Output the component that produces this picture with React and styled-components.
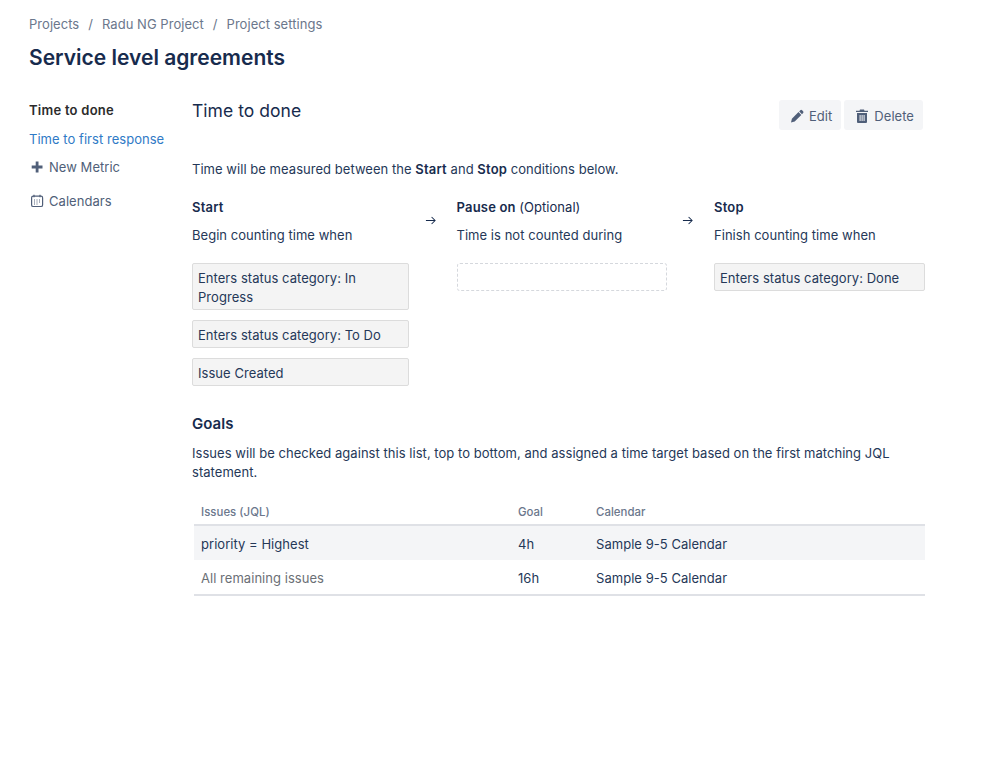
import React from "react";
import styled, { createGlobalStyle } from "styled-components";

const GlobalStyle = createGlobalStyle`
  html, body {
    margin: 0;
    background: #fff;
    font-family: Inter, "Liberation Sans", sans-serif;
    color: #172b4d;
  }
`;

const Page = styled.div`
  width: 999px;
  height: 759px;
  box-sizing: border-box;
  padding: 15px 74px 0 29px;
  overflow: hidden;
`;

const Breadcrumbs = styled.nav`
  display: flex;
  gap: 9px;
  height: 18px;
  line-height: 18px;
  font-size: 13px;
  letter-spacing: 0.04px;
  color: #6b778c;
`;

const PageTitle = styled.h1`
  margin: 10px 0 0;
  font-size: 21px;
  line-height: 30px;
  font-weight: 600;
  color: #172b4d;
`;

const Columns = styled.div`
  display: flex;
  margin-top: 27px;
`;

const Sidebar = styled.aside`
  width: 163px;
  flex-shrink: 0;
  font-size: 13px;
  letter-spacing: 0.04px;
`;

const NavItem = styled.div`
  display: flex;
  align-items: center;
  height: 20px;
  margin-bottom: ${(p) => p.$gap}px;
  font-weight: ${(p) => (p.$active ? 600 : 400)};
  letter-spacing: ${(p) => (p.$active ? "0.25px" : "inherit")};
  color: ${(p) => (p.$active ? "#2b2b2b" : p.$link ? "#2f7ac6" : "#505f79")};
`;

const NavIcon = styled.svg`
  width: 16px;
  height: 16px;
  margin-right: 4px;
  color: #505f79;
`;

const Main = styled.main`
  width: 733px;
  font-size: 13px;
  letter-spacing: 0.04px;
  line-height: 20px;
  color: #253858;
`;

const Header = styled.div`
  display: flex;
  justify-content: space-between;
  align-items: flex-start;
`;

const MetricTitle = styled.h2`
  margin: 0;
  font-size: 17.5px;
  line-height: 21px;
  font-weight: 400;
  color: #172b4d;
`;

const Actions = styled.div`
  display: flex;
  gap: 3px;
  margin-right: 2px;
`;

const ActionButton = styled.button`
  display: flex;
  align-items: center;
  gap: 4px;
  height: 30px;
  padding: 1px 9px 0 10px;
  border: 0;
  border-radius: 3px;
  background: #f4f5f7;
  color: #505f79;
  font: inherit;
  letter-spacing: inherit;
`;

const Intro = styled.p`
  margin: 29px 0 0;
`;

const Strong = styled.b`
  font-weight: 600;
  letter-spacing: 0.2px;
  color: #172b4d;
`;

const Flow = styled.div`
  display: flex;
  margin-top: 18px;
`;

const Step = styled.div`
  width: ${(p) => p.$width}px;
  flex-shrink: 0;
`;

const StepTitle = styled.div`
  font-weight: 600;
  letter-spacing: 0.2px;
  color: #172b4d;
`;

const Optional = styled.span`
  font-weight: 400;
  letter-spacing: 0.04px;
`;

const StepHint = styled.div`
  margin: 8px 0 18px;
`;

const Arrow = styled.div`
  width: 47.5px;
  flex-shrink: 0;
  display: flex;
  justify-content: center;
  box-sizing: border-box;
  padding: 18px 5px 0 0;
  svg {
    width: 11px;
    height: 11px;
  }
`;

const Condition = styled.div`
  box-sizing: border-box;
  padding: 5px 5px 2px;
  margin-bottom: 10px;
  line-height: 19px;
  background: #f4f4f4;
  border: 1px solid #dcdcdc;
  border-radius: 2px;
`;

const EmptySlot = styled.div`
  height: 28px;
  box-sizing: border-box;
  border: 1px dashed #d5d8dd;
  border-radius: 3px;
`;

const SectionTitle = styled.h3`
  margin: 17px 0 0;
  font-size: 15px;
  line-height: 22px;
  font-weight: 600;
  color: #172b4d;
`;

const Paragraph = styled.p`
  margin: 9px 0 0;
  line-height: 19px;
`;

const Table = styled.table`
  width: 731px;
  margin: 20px 0 0 2px;
  border-collapse: collapse;
  table-layout: fixed;
  border-bottom: 2px solid #dfe1e6;
`;

const HeadCell = styled.th`
  height: 19px;
  padding: 0 7px 2px;
  text-align: left;
  font-size: 11.4px;
  font-weight: 500;
  color: #6b778c;
  border-bottom: 2px solid #dfe1e6;
`;

const Row = styled.tr`
  background: ${(p) => (p.$shaded ? "#f4f5f7" : "#fff")};
`;

const Cell = styled.td`
  height: 32px;
  padding: 2px 7px 0;
  color: ${(p) => (p.$muted ? "#6b6f76" : "#253858")};
`;

const rows = [
  { jql: "priority = Highest", goal: "4h", shaded: true },
  { jql: "All remaining issues", goal: "16h", muted: true },
];

const RightArrow = () => (
  <svg viewBox="0 0 12 12" fill="none" stroke="#172b4d" strokeWidth="1.100">
    <path d="M1 6h10M7.200 2.200 11 6 7.200 9.800" />
  </svg>
);

export default function App() {
  return (
    <Page>
      <GlobalStyle />
      <Breadcrumbs>
        <span>Projects</span>
        <span>/</span>
        <span>Radu NG Project</span>
        <span>/</span>
        <span>Project settings</span>
      </Breadcrumbs>
      <PageTitle>Service level agreements</PageTitle>
      <Columns>
        <Sidebar>
          <NavItem $active $gap={8.5}>Time to done</NavItem>
          <NavItem $link $gap={8.5}>Time to first response</NavItem>
          <NavItem $gap={14}>
            <NavIcon viewBox="0 0 16 16" fill="currentColor">
              <path d="M6.700 2.500h2.800v4.100h4v2.800h-4v4.100H6.700V9.400h-4V6.600h4z" />
            </NavIcon>
            New Metric
          </NavItem>
          <NavItem $gap={0}>
            <NavIcon viewBox="0 0 16 16" fill="none" stroke="currentColor" strokeWidth="1.200">
              <rect x="2.600" y="3.100" width="11" height="10.400" rx="1.600" />
              <path d="M5 1.800v2.400M11 1.800v2.400" />
              <path d="M5 7h1M7.500 7h1M10 7h1M5 9h1M7.500 9h1M10 9h1M5 11h1M7.500 11h1" strokeWidth="1" />
            </NavIcon>
            Calendars
          </NavItem>
        </Sidebar>
        <Main>
          <Header>
            <MetricTitle>Time to done</MetricTitle>
            <Actions>
              <ActionButton>
                <svg width="16" height="16" viewBox="0 0 16 16" fill="#505f79">
                  <path d="M11.300 2.300a1.300 1.300 0 0 1 1.800 0l1 1a1.300 1.300 0 0 1 0 1.800L13 6.200 10.200 3.400zM9.500 4.100l2.800 2.800-6.600 6.600-3.700.9.900-3.700z" />
                </svg>
                Edit
              </ActionButton>
              <ActionButton>
                <svg width="16" height="16" viewBox="0 0 16 16" fill="#505f79">
                  <path fillRule="evenodd" d="M6 1.500h4l.5 1.200H14v1.300H2V2.700h3.500zM3 5h10v8.700c0 .7-.5 1.300-1.200 1.300H4.200C3.500 15 3 14.400 3 13.700zM5.600 7v6h1V7zm2 0v6h1V7zm2 0v6h1V7z" />
                </svg>
                Delete
              </ActionButton>
            </Actions>
          </Header>
          <Intro>
            Time will be measured between the <Strong>Start</Strong> and <Strong>Stop</Strong> conditions below.
          </Intro>
          <Flow>
            <Step $width={217}>
              <StepTitle>Start</StepTitle>
              <StepHint>Begin counting time when</StepHint>
              <Condition>Enters status category: In Progress</Condition>
              <Condition>Enters status category: To Do</Condition>
              <Condition>Issue Created</Condition>
            </Step>
            <Arrow><RightArrow /></Arrow>
            <Step $width={210}>
              <StepTitle>
                Pause on <Optional>(Optional)</Optional>
              </StepTitle>
              <StepHint>Time is not counted during</StepHint>
              <EmptySlot />
            </Step>
            <Arrow><RightArrow /></Arrow>
            <Step $width={211}>
              <StepTitle>Stop</StepTitle>
              <StepHint>Finish counting time when</StepHint>
              <Condition>Enters status category: Done</Condition>
            </Step>
          </Flow>
          <SectionTitle>Goals</SectionTitle>
          <Paragraph>
            Issues will be checked against this list, top to bottom, and assigned a time target based on the first matching JQL statement.
          </Paragraph>
          <Table>
            <colgroup>
              <col width="317" />
              <col width="78" />
              <col />
            </colgroup>
            <thead>
              <tr>
                <HeadCell>Issues (JQL)</HeadCell>
                <HeadCell>Goal</HeadCell>
                <HeadCell>Calendar</HeadCell>
              </tr>
            </thead>
            <tbody>
              {rows.map((row) => (
                <Row key={row.jql} $shaded={row.shaded}>
                  <Cell $muted={row.muted}>{row.jql}</Cell>
                  <Cell>{row.goal}</Cell>
                  <Cell>Sample 9-5 Calendar</Cell>
                </Row>
              ))}
            </tbody>
          </Table>
        </Main>
      </Columns>
    </Page>
  );
}
